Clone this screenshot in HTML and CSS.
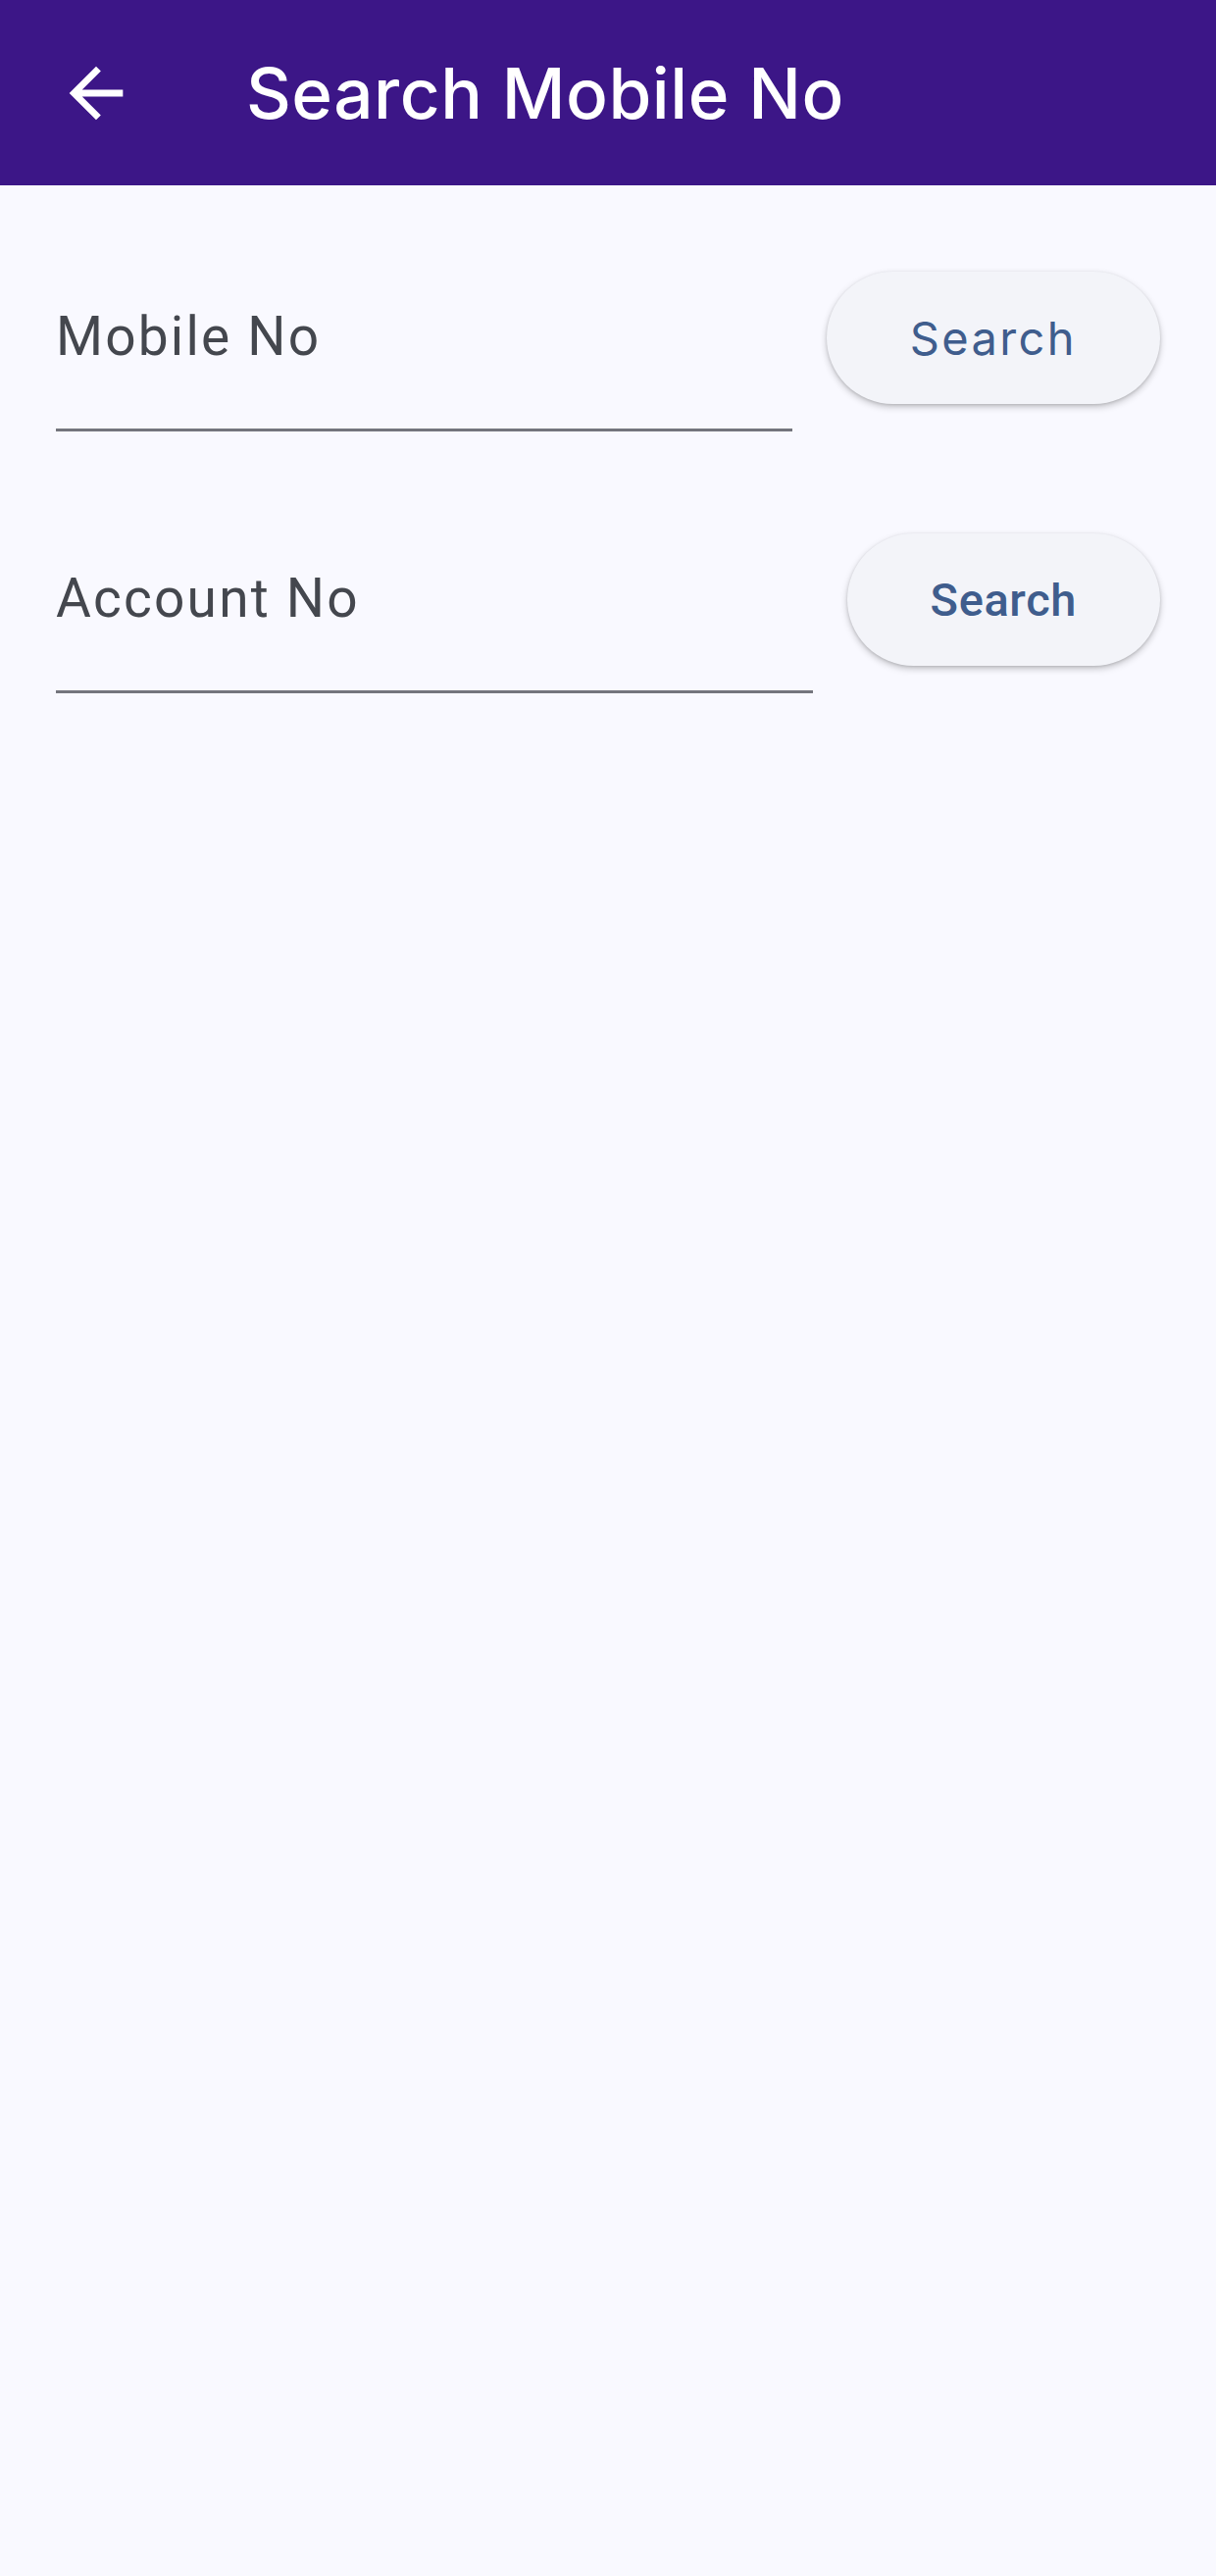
FILE: index.html
```html
<!DOCTYPE html>
<html lang="en">
<head>
  <meta charset="UTF-8" />
  <title>Search Mobile No</title>
  <link rel="stylesheet" href="styles.css">
</head>
<body>
  <header class="app-bar">
    <button class="back-btn" aria-label="Back">
      <svg viewBox="0 0 24 24" width="82" height="82">
        <path d="M20 11H7.83l5.59-5.59L12 4l-8 8 8 8 1.41-1.41L7.83 13H20v-2z" fill="#fff"/>
      </svg>
    </button>
    <h1 class="title">Search Mobile No</h1>
  </header>

  <main class="content">
    <!-- Search by mobile number -->
    <div class="search-row">
      <label class="field">
        <input type="text" placeholder="Mobile No" />
      </label>
      <button class="search-btn poppins">Search</button>
    </div>

    <!-- Search by account number -->
    <div class="search-row">
      <label class="field">
        <input type="text" placeholder="Account No" />
      </label>
      <button class="search-btn roboto">Search</button>
    </div>
  </main>
</body>
</html>
```

FILE: styles.css
```css
/* Basic Reset */
* {
  margin: 0;
  padding: 0;
  box-sizing: border-box;
}

body {
  font-family: Roboto, "Liberation Sans", sans-serif;
  background-color: #f9f9ff;
  min-height: 2627px;
}

.app-bar {
  height: 189px;
  background-color: #3c1687;
  display: flex;
  align-items: center;
  padding-left: 57px;
}

.back-btn {
  width: 82px;
  height: 82px;
  border: none;
  background: none;
  display: flex;
}

.title {
  margin-left: 112px;
  color: #fff;
  font-family: Inter, "Noto Sans", sans-serif;
  font-weight: 500;
  font-size: 71px;
  letter-spacing: 0.5px;
}

.content {
  padding: 59px 57px 0;
  display: flex;
  flex-direction: column;
  gap: 75px;
}

.search-row {
  display: flex;
  align-items: center;
  gap: 35px;
}

.field {
  flex: 1;
  height: 192px;
  display: flex;
  align-items: center;
  border-bottom: 3px solid #74757d;
}

.field input {
  width: 100%;
  border: none;
  outline: none;
  background: transparent;
  font-family: Roboto, sans-serif;
  font-size: 55px;
  letter-spacing: 2.2px;
  color: #44474e;
}

.field input::placeholder {
  color: #44474e;
}

/* Elevated pill buttons */
.search-btn {
  height: 135px;
  padding: 0 85px;
  border: none;
  border-radius: 68px;
  background-color: #f3f4f9;
  color: #3f5d8d;
  font-size: 47px;
  cursor: pointer;
  box-shadow: 0 3px 7px rgba(0, 0, 0, 0.22), 0 1px 3px rgba(0, 0, 0, 0.12);
}

.search-btn.poppins {
  font-family: Inter, "Noto Sans", sans-serif;
  font-weight: 400;
  letter-spacing: 2.4px;
}

.search-btn.roboto {
  font-family: Roboto, sans-serif;
  font-weight: 500;
  letter-spacing: 0.6px;
}
```
